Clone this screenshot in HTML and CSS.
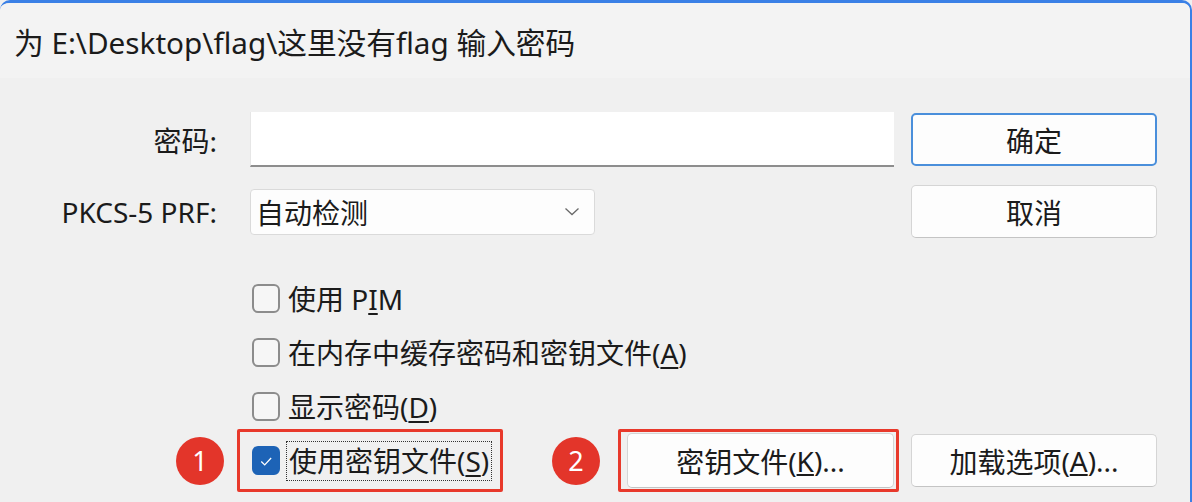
FILE: index.html
```html
<!DOCTYPE html>
<html lang="zh-CN">
<head>
<meta charset="utf-8">
<title>输入密码</title>
<link rel="stylesheet" href="styles.css">
</head>
<body>
<div class="window">
  <div class="titlebar">为 E:\Desktop\flag\这里没有flag 输入密码</div>
  <div class="content">
    <div class="form-grid">
      <div class="label">密码:</div>
      <div class="field"><div class="password"></div></div>
      <div class="btncell"><div class="btn default">确定</div></div>

      <div class="label">PKCS-5 PRF:</div>
      <div class="field">
        <div class="select">
          <span>自动检测</span>
          <svg class="chev" width="16" height="9" viewBox="0 0 16 9"><polyline points="1.5,1.5 8,7.5 14.5,1.5" fill="none" stroke="#6b6b6b" stroke-width="1.3"/></svg>
        </div>
      </div>
      <div class="btncell"><div class="btn">取消</div></div>
    </div>

    <div class="checks">
      <div class="check-row"><span class="box"></span><span class="ctext">使用 P<u>I</u>M</span></div>
      <div class="check-row"><span class="box"></span><span class="ctext">在内存中缓存密码和密钥文件(<u>A</u>)</span></div>
      <div class="check-row"><span class="box"></span><span class="ctext">显示密码(<u>D</u>)</span></div>
    </div>

    <div class="bottom-row">
      <div class="badge b1">1</div>
      <div class="redbox rb1">
        <div class="check-row in">
          <span class="box checked"><svg width="28" height="28" viewBox="0 0 28 28"><polyline points="8.5,14.5 12.5,18.5 20,10.5" fill="none" stroke="#ffffff" stroke-width="1.5"/></svg></span>
          <span class="ctext focus">使用密钥文件(<u>S</u>)</span>
        </div>
      </div>
      <div class="badge b2">2</div>
      <div class="redbox rb2"><div class="btn keybtn">密钥文件(<u>K</u>)...</div></div>
      <div class="btn loadbtn">加载选项(<u>A</u>)...</div>
    </div>
  </div>
</div>
</body>
</html>
```
FILE: styles.css
```css
html, body {
  margin: 0;
  padding: 0;
  background: #f0f0f0;
}
body {
  font-family: "Noto Sans", "Noto Sans CJK SC", sans-serif;
  color: #1b1b1b;
  font-size: 28px;
}
.window {
  width: 1190px;
  height: 499px;
  border-top: 3px solid #3a80e6;
  border-right: 2px solid #3a80e6;
  border-radius: 10px 10px 0 0;
  background: #f0f0f0;
  overflow: hidden;
}
.titlebar {
  height: 75px;
  background: #f3f3f3;
  padding-left: 14px;
  box-sizing: border-box;
  display: flex;
  align-items: center;
  font-size: 29.7px;
  padding-top: 2px;
  white-space: nowrap;
}
.content {
  padding-top: 34px;
}
.form-grid {
  display: grid;
  grid-template-columns: 250px 661px 246px;
  row-gap: 18px;
  align-items: center;
}
.label {
  text-align: right;
  padding-right: 33px;
  white-space: nowrap;
}
.password {
  width: 644px;
  height: 55px;
  background: #ffffff;
  border-bottom: 2px solid #8d8d8d;
  border-left: 1px solid #e6e6e6;
  box-sizing: border-box;
}
.select {
  width: 345px;
  height: 46px;
  background: #fdfdfd;
  border: 1px solid #dadada;
  border-radius: 4px;
  box-sizing: border-box;
  display: flex;
  align-items: center;
  justify-content: space-between;
  padding: 0 14px 0 5px;
}
.chev { display: block; }
.btn {
  height: 53px;
  width: 246px;
  box-sizing: border-box;
  background: #fdfdfd;
  border: 1px solid #d5d5d5;
  border-bottom-color: #c4c4c4;
  border-radius: 5px;
  display: flex;
  align-items: center;
  justify-content: center;
  white-space: nowrap;
}
.btn.default {
  border: 2px solid #4a8fdb;
}
.checks {
  margin-top: 40px;
  padding-left: 252px;
  display: flex;
  flex-direction: column;
  gap: 14px;
}
.check-row {
  height: 40px;
  display: flex;
  align-items: center;
  white-space: nowrap;
}
.box {
  width: 28px;
  height: 29px;
  box-sizing: border-box;
  border: 2px solid #8c8c8c;
  border-radius: 6px;
  background: #f6f6f6;
  margin-right: 8px;
  flex: none;
}
.box.checked {
  background: #1d63b6;
  border-color: #1d63b6;
  display: flex;
  align-items: center;
  justify-content: center;
}
.box.checked svg { display: block; }
.ctext u { text-decoration-thickness: 1.5px; text-underline-offset: 3px; }
.ctext.focus {
  outline: 1px dotted #333;
  outline-offset: 1px;
  line-height: 36px;
  padding: 0 1px;
}
.bottom-row {
  margin-top: 3px;
  height: 63px;
  display: flex;
  align-items: center;
  padding-left: 176px;
}
.badge {
  width: 48px;
  height: 48px;
  border-radius: 50%;
  background: #e3352a;
  color: #ffffff;
  display: flex;
  align-items: center;
  justify-content: center;
  font-size: 27px;
  flex: none;
}
.redbox {
  border: 3px solid #e8392b;
  border-radius: 2px;
  box-sizing: border-box;
  height: 63px;
  display: flex;
  align-items: center;
}
.rb1 {
  width: 266px;
  margin-left: 13px;
  padding-left: 12px;
}
.b2 { margin-left: 49px; }
.rb2 {
  width: 281px;
  margin-left: 18px;
  padding-left: 6px;
}
.keybtn {
  width: 267px;
  height: 55px;
}
.loadbtn {
  margin-left: 12px;
  width: 246px;
}
```
